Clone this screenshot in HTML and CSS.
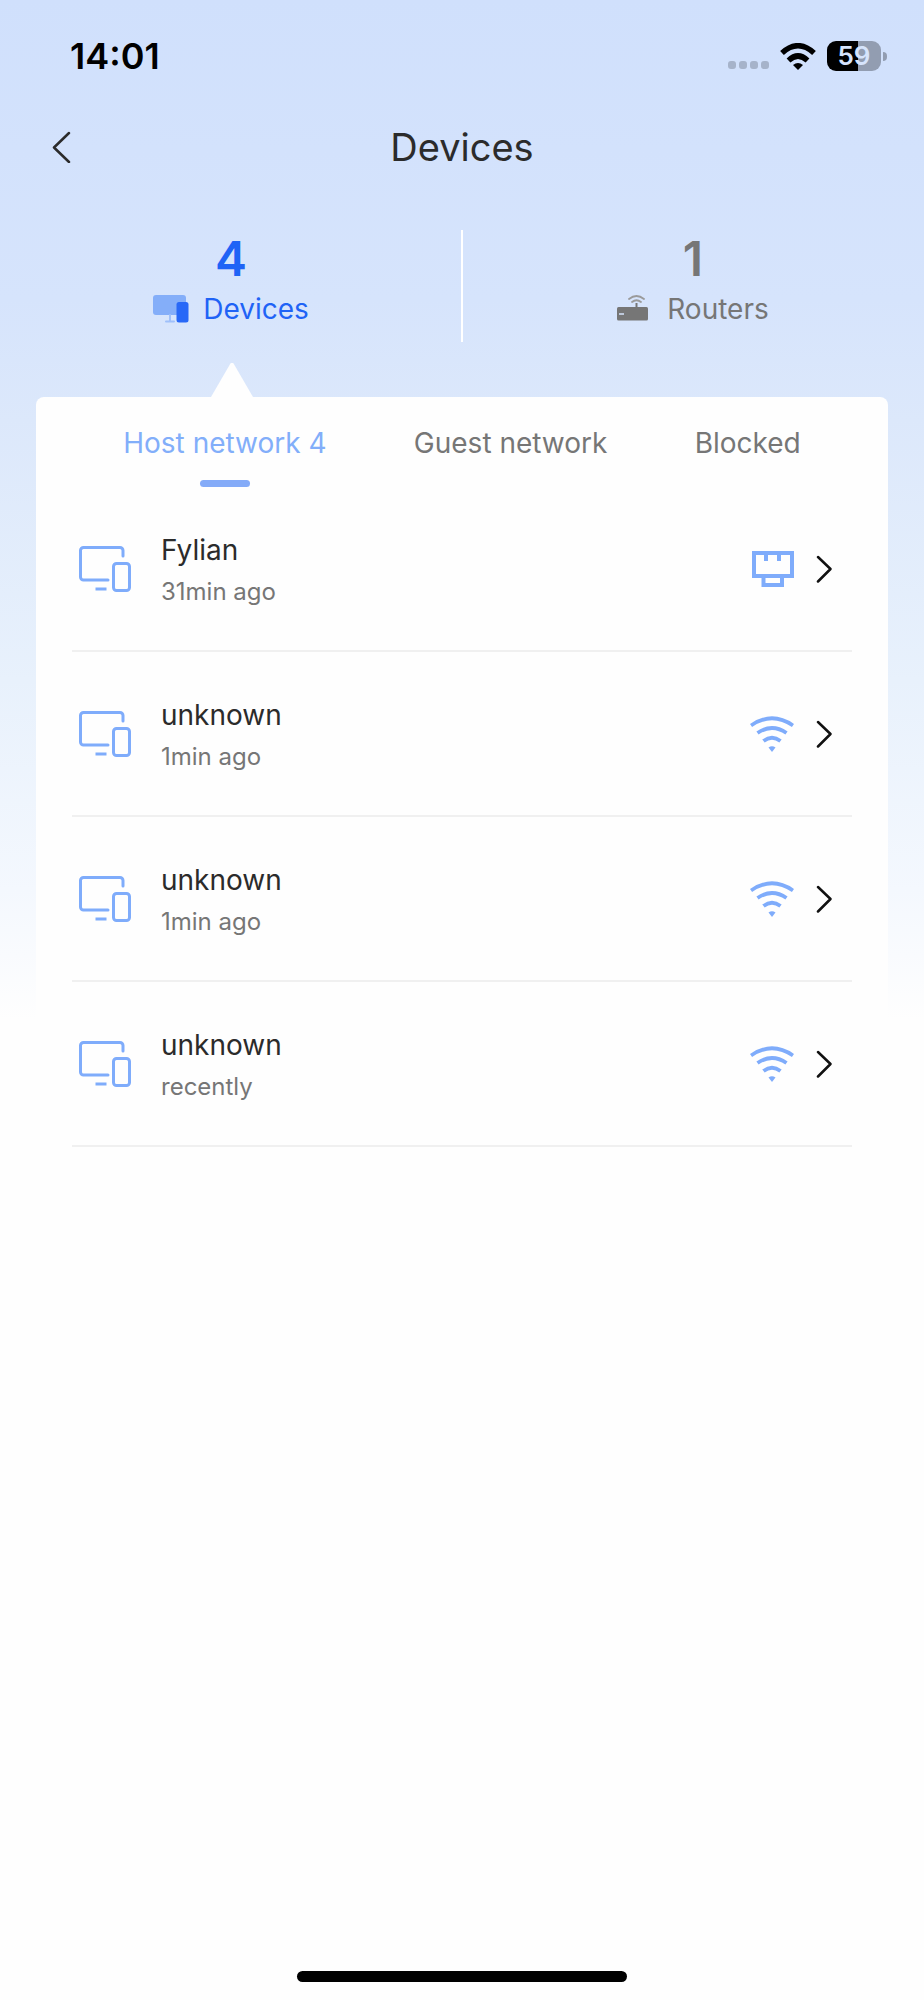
FILE: index.html
```html
<!DOCTYPE html>
<html lang="en">
<head>
<meta charset="utf-8">
<meta name="viewport" content="width=device-width, initial-scale=1">
<title>Devices</title>
<link rel="stylesheet" href="styles.css">
</head>
<body>
<svg class="sprite" aria-hidden="true">
  <symbol id="device" viewBox="0 0 52 46">
    <g fill="none" stroke="currentColor" stroke-width="3" stroke-linecap="round" stroke-linejoin="round">
      <path d="M44 10V4.500a3 3 0 0 0-3-3H4.500a3 3 0 0 0-3 3V31a3 3 0 0 0 3 3H29"/>
      <path d="M18 43h8" stroke-linecap="square"/>
      <rect x="34.500" y="17.500" width="16" height="27" rx="3"/>
    </g>
  </symbol>
  <symbol id="wifi" viewBox="0 0 44 36">
    <g fill="none" stroke="currentColor" stroke-width="3.800">
      <path d="M1 9.500Q22-5 43 9.500"/>
      <path d="M7.500 17Q22 7 36.500 17"/>
      <path d="M13.500 25Q22 18.500 30.500 25"/>
    </g>
    <path fill="currentColor" d="M18.500 31.500Q22 29 25.500 31.500L22 36Z"/>
  </symbol>
  <symbol id="ethernet" viewBox="0 0 44 36">
    <path fill="none" stroke="currentColor" stroke-width="4" d="M4 2h38v23H4zM13.500 25v9h18.500V25M16 2v8M29 2v8"/>
  </symbol>
  <symbol id="chevron" viewBox="0 0 16 28">
    <path fill="none" stroke="currentColor" stroke-width="2.500" stroke-linecap="round" stroke-linejoin="round" d="M2 2l12.500 12L2 26.500"/>
  </symbol>
</svg>
<div class="app">
  <div class="status">
    <time class="clock">14:01</time>
    <div class="indicators">
      <span class="dots"><i></i><i></i><i></i><i></i></span>
      <svg class="signal" viewBox="0 0 36 27" aria-hidden="true">
        <g fill="none" stroke="#000" stroke-width="5.500">
          <path d="M2 10Q18-4.500 34 10"/>
          <path d="M8.500 17.500Q18 8.500 27.500 17.500"/>
        </g>
        <path d="M13 22Q18 18 23 22L18 27Z"/>
      </svg>
      <span class="battery"><span class="level">59</span></span>
    </div>
  </div>

  <header class="header">
    <button class="back" aria-label="Back">
      <svg viewBox="0 0 20 32" aria-hidden="true"><path d="M18 2L3 16.500 18 31" fill="none" stroke="currentColor" stroke-width="2.500" stroke-linecap="round" stroke-linejoin="round"/></svg>
    </button>
    <h1 class="title">Devices</h1>
  </header>

  <nav class="stats" aria-label="Category">
    <button class="stat active">
      <span class="count">4</span>
      <span class="label">
        <svg viewBox="0 0 36 28" aria-hidden="true">
          <rect x="0" y="0" width="33" height="20" rx="3" fill="#84aef9"/>
          <path d="M17 20v6M13 26.500h8" stroke="#9fc0fa" stroke-width="2" stroke-linecap="round"/>
          <rect x="23.500" y="7" width="12" height="20.500" rx="2.500" fill="#2868f7"/>
        </svg>
        Devices
      </span>
    </button>
    <button class="stat">
      <span class="count">1</span>
      <span class="label">
        <svg viewBox="0 0 36 28" aria-hidden="true">
          <g fill="none" stroke="#9a9a9a" stroke-width="1.800" stroke-linecap="round">
            <path d="M12 4Q19.500-2 27 4"/>
            <path d="M15 7Q19.500 3.500 24 7"/>
          </g>
          <path d="M19.500 8v6" stroke="#767676" stroke-width="2"/>
          <rect x="0" y="12" width="31" height="13.500" rx="1.500" fill="#767676"/>
          <path d="M2 19h5" stroke="#d6e4fc" stroke-width="1.500"/>
        </svg>
        Routers
      </span>
    </button>
  </nav>

  <main class="panel">
    <div class="tabs" role="tablist">
      <button class="tab selected" role="tab" aria-selected="true">Host network 4</button>
      <button class="tab" role="tab" aria-selected="false">Guest network</button>
      <button class="tab" role="tab" aria-selected="false">Blocked</button>
    </div>
    <ul class="list">
      <li><a class="row" href="#">
        <svg class="device"><use href="#device"/></svg>
        <span class="text"><span class="name">Fylian</span><span class="seen">31min ago</span></span>
        <svg class="link"><use href="#ethernet"/></svg>
        <svg class="chevron"><use href="#chevron"/></svg>
      </a></li>
      <li><a class="row" href="#">
        <svg class="device"><use href="#device"/></svg>
        <span class="text"><span class="name">unknown</span><span class="seen">1min ago</span></span>
        <svg class="link"><use href="#wifi"/></svg>
        <svg class="chevron"><use href="#chevron"/></svg>
      </a></li>
      <li><a class="row" href="#">
        <svg class="device"><use href="#device"/></svg>
        <span class="text"><span class="name">unknown</span><span class="seen">1min ago</span></span>
        <svg class="link"><use href="#wifi"/></svg>
        <svg class="chevron"><use href="#chevron"/></svg>
      </a></li>
      <li><a class="row" href="#">
        <svg class="device"><use href="#device"/></svg>
        <span class="text"><span class="name">unknown</span><span class="seen">recently</span></span>
        <svg class="link"><use href="#wifi"/></svg>
        <svg class="chevron"><use href="#chevron"/></svg>
      </a></li>
    </ul>
  </main>
  <div class="home"></div>
</div>
</body>
</html>
```

FILE: styles.css
```css
* { box-sizing: border-box; }
body {
  margin: 0;
  background: #fefefe;
  font-family: Inter, "Liberation Sans", sans-serif;
  color: #2b2b2b;
}
button {
  padding: 0;
  border: 0;
  background: none;
  font: inherit;
  color: inherit;
}
.sprite { position: absolute; width: 0; height: 0; }
.app {
  display: flex;
  flex-direction: column;
  min-height: 100vh;
  background: linear-gradient(#d0e0fc 0, #d6e4fc 300px, #dce8fb 420px, #e8f1fc 680px, #f4f8fe 890px, #fefefe 1020px);
}
.status {
  display: flex;
  align-items: center;
  justify-content: space-between;
  height: 112px;
  padding: 0 43px 0 70px;
}
.clock { font-size: 36px; font-weight: 600; color: #000; }
.indicators { display: flex; align-items: center; gap: 11px; }
.dots { display: flex; gap: 3px; padding-top: 18px; }
.dots i { width: 8px; height: 8px; border-radius: 3px; background: #a6b3ca; }
.signal { width: 36px; height: 27px; }
.battery {
  position: relative;
  width: 54px;
  height: 30px;
  border-radius: 9px;
  background: linear-gradient(90deg, #000 58%, #929db1 58%);
}
.battery::after {
  content: "";
  position: absolute;
  left: 56px;
  top: 11px;
  width: 4px;
  height: 9px;
  border-radius: 0 5px 5px 0;
  background: #929db1;
}
.level {
  display: block;
  font-size: 26px;
  font-weight: 600;
  line-height: 30px;
  text-align: center;
  color: #d6e4fc;
}
.header {
  display: grid;
  grid-template-columns: 1fr auto 1fr;
  align-items: center;
  height: 70px;
  padding: 0 51px;
}
.back { justify-self: start; height: 32px; }
.back svg { display: block; width: 20px; height: 32px; }
.title { margin: 0; font-size: 38px; font-weight: 400; }
.stats {
  display: grid;
  grid-template-columns: 1fr 1fr;
  margin: 48px 0 55px;
}
.stat {
  position: relative;
  display: flex;
  flex-direction: column;
  align-items: center;
  padding: 1px 0 11px;
  color: #767676;
}
.stat + .stat::before {
  content: "";
  position: absolute;
  left: -1px;
  top: 0;
  bottom: 0;
  width: 2px;
  background: #fff;
}
.stat.active { color: #1f63f6; }
.stat.active::after {
  content: "";
  position: absolute;
  left: 50%;
  bottom: -55px;
  width: 42px;
  height: 34px;
  margin-left: -20px;
  background: #fefefe;
  clip-path: polygon(47% 0, 53% 0, 100% 100%, 0 100%);
}
.count { font-size: 48px; font-weight: 600; line-height: 56px; }
.label {
  display: flex;
  align-items: center;
  gap: 14px;
  font-size: 28px;
  line-height: 44px;
}
.label svg { width: 36px; height: 28px; }
.panel {
  margin: 0 36px;
  border-radius: 8px;
  background: #fefefe;
}
.tabs { display: flex; justify-content: space-evenly; height: 90px; }
.tab {
  display: flex;
  flex-direction: column;
  align-items: center;
  padding-top: 24px;
  font-size: 28px;
  line-height: 44px;
  color: #767676;
}
.tab.selected { color: #82aefa; }
.tab.selected::after {
  content: "";
  width: 50px;
  height: 7px;
  margin-top: 15px;
  border-radius: 4px;
  background: #84abf8;
}
.list { margin: 0; padding: 0 36px; list-style: none; }
.row {
  display: flex;
  align-items: center;
  height: 165px;
  padding: 0 20px 0 7px;
  border-bottom: 2px solid #f0f0f0;
  text-decoration: none;
  color: #2b2b2b;
}
.device { width: 52px; height: 46px; color: #7facfb; }
.text { display: flex; flex: 1; flex-direction: column; padding: 2px 0 0 30px; }
.name { font-size: 28px; line-height: 44px; }
.seen { font-size: 24px; line-height: 40px; color: #767676; }
.link { width: 44px; height: 36px; margin-right: 22px; color: #7facfb; }
.chevron { width: 16px; height: 28px; color: #111; }
.home {
  width: 330px;
  height: 11px;
  margin: auto auto 18px;
  border-radius: 6px;
  background: #000;
}
```
